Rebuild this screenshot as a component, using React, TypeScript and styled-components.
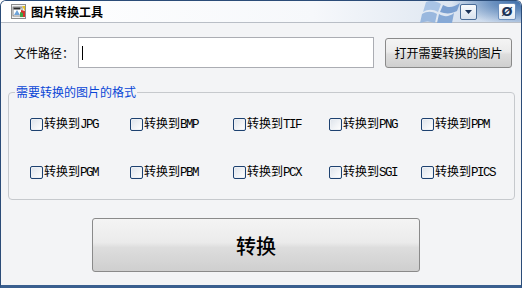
import * as React from 'react';
import styled, { createGlobalStyle } from 'styled-components';

const GlobalStyle = createGlobalStyle`
	html, body {
		margin: 0;
		padding: 0;
		background: #ffffff;
	}
	body {
		font-family: "Noto Sans CJK SC", "DejaVu Sans", sans-serif;
		font-size: 12px;
		color: #000;
	}
`;

const Window = styled.div`
	box-sizing: border-box;
	width: 522px;
	height: 288px;
	display: flex;
	flex-direction: column;
	border: 1px solid #2b4c78;
	border-bottom: 3px solid #3a5f8f;
	border-radius: 6px 6px 0 0;
	background: #f3f4f6;
	overflow: hidden;
`;

const TitleBar = styled.div`
	height: 21px;
	flex: none;
	display: flex;
	align-items: center;
	padding-left: 10px;
	border-bottom: 1px solid #b9bec6;
	background:
		radial-gradient(ellipse 70px 24px at 100% 0%, #3f6ea8 0%, rgba(80, 125, 180, 0.8) 40%, rgba(160, 190, 225, 0) 100%),
		linear-gradient(to right, #ffffff 0%, #f6f8fb 60%, #e3eaf3 82%, #c3d4ea 100%);
	position: relative;
`;

const AppIcon = styled.svg`
	width: 15px;
	height: 15px;
	flex: none;
`;

const Title = styled.span`
	margin-left: 5px;
	font-weight: bold;
	font-size: 12px;
	line-height: 14px;
`;

const Watermark = styled.svg`
	position: absolute;
	left: 415px;
	top: 0;
	width: 46px;
	height: 22px;
`;

const CaptionButtons = styled.div`
	margin-left: auto;
	display: flex;
	align-items: center;
	gap: 21px;
	padding-right: 5px;
	position: relative;
`;

const CaptionButton = styled.div`
	box-sizing: border-box;
	width: 17px;
	height: 16px;
	border: 1px solid #4a6c97;
	border-radius: 2px;
	background: linear-gradient(#fafbfd, #d9e2ee);
	display: flex;
	align-items: center;
	justify-content: center;
	color: #1c3358;
	font-family: "DejaVu Sans", sans-serif;
	font-weight: bold;
	font-size: 13px;
	line-height: 1;
`;

const CloseButton = styled(CaptionButton)`
	border-color: #6c8fbd;
	background: linear-gradient(#ffffff, #e4ebf4);
	width: 18px;
	height: 17px;
`;

const Body = styled.div`
	flex: 1;
	display: flex;
	flex-direction: column;
	padding: 14px 7px 0 7px;
`;

const PathRow = styled.div`
	display: flex;
	align-items: center;
	height: 31px;
`;

const Label = styled.span`
	width: 64px;
	padding-left: 6px;
	flex: none;
	white-space: nowrap;
	font-size: 12px;
`;

const PathInput = styled.div`
	box-sizing: border-box;
	width: 296px;
	height: 31px;
	border: 1px solid #abadb3;
	background: #ffffff;
	display: flex;
	align-items: center;
	padding-left: 3px;
`;

const Caret = styled.span`
	width: 1px;
	height: 14px;
	background: #000;
`;

const Button = styled.button<{ $big?: boolean }>`
	box-sizing: border-box;
	border: 1px solid #8a8a8a;
	border-radius: 3px;
	background: linear-gradient(#f4f4f4 0%, #ebebeb 45%, #dddddd 55%, #cfcfcf 100%);
	font-family: "Noto Sans CJK SC", sans-serif;
	color: #000;
	padding: 0;
	font-size: ${(p) => (p.$big ? '20px' : '12px')};
	font-weight: ${(p) => (p.$big ? 500 : 400)};
`;

const OpenButton = styled(Button)`
	margin-left: 11px;
	width: 127px;
	height: 30px;
`;

const Group = styled.fieldset`
	box-sizing: border-box;
	margin: 17px 0 0 0;
	width: 507px;
	height: 115px;
	border: 1px solid #c6c9cd;
	border-radius: 4px;
	padding: 18px 0 0 21px;
`;

const Legend = styled.legend`
	color: #0a46d6;
	font-size: 12px;
	padding: 0 1px;
	margin-left: -15px;
	line-height: 14px;
`;

const Grid = styled.div`
	display: grid;
	grid-template-columns: 100px 103px 96px 92px auto;
	row-gap: 34px;
`;

const Option = styled.label`
	display: flex;
	align-items: center;
	height: 14px;
	white-space: nowrap;
`;

const Box = styled.span`
	box-sizing: border-box;
	width: 13px;
	height: 13px;
	flex: none;
	border: 1px solid #1d4170;
	border-radius: 2px;
	background: linear-gradient(135deg, #dce2ea 0%, #f2f4f7 60%, #ffffff 100%);
	box-shadow: inset 0 0 0 1px #eef1f5;
	margin-right: 1px;
`;

const OptionText = styled.span`
	line-height: 14px;
`;

const Ext = styled.span`
	font-family: "Liberation Mono", monospace;
	font-size: 12.5px;
	letter-spacing: -1.5px;
`;

const ConvertRow = styled.div`
	padding: 18px 0 0 84px;
`;

const ConvertButton = styled(Button)`
	width: 328px;
	height: 54px;
`;

const formats = ['JPG', 'BMP', 'TIF', 'PNG', 'PPM', 'PGM', 'PBM', 'PCX', 'SGI', 'PICS'];

export default function App(): JSX.Element {
	return (
		<>
			<GlobalStyle />
			<Window>
				<TitleBar>
					<AppIcon viewBox="0 0 15 15">
						<rect x="0.5" y="0.5" width="14" height="14" fill="#f4f4f4" stroke="#8c8c8c" />
						<rect x="2" y="3" width="9" height="9" fill="#ffffff" stroke="#6b6b6b" strokeWidth="0.8" />
						<path d="M3 11 L6 6 L9 11 Z" fill="#6fa3d8" />
						<rect x="2.5" y="3.5" width="7" height="2" fill="#2c2c2c" />
						<path d="M11 2 L14 2 L14 7 Z" fill="#e8c21f" />
						<path d="M10 6 L14 7 L14 13 L10 13 Z" fill="#d6322c" />
						<path d="M9 8 L12 9 L12 13 L9 13 Z" fill="#3fa447" />
					</AppIcon>
					<Title>图片转换工具</Title>
					<Watermark viewBox="0 0 46 22">
						<path d="M6 13 C11 10 16 10 21 13 L19 22 C14 20 9 20 4 22 Z" fill="#9ab8de" />
						<path d="M23 13 C28 16 33 16 38 12 L36 22 C31 24 26 24 21 22 Z" fill="#86a9d6" />
						<path d="M10 1 C15 -1 20 0 25 3 L22 11 C17 8 12 8 7 11 Z" fill="#a9c4e6" />
						<path d="M27 4 C32 7 37 7 44 2 L41 10 C35 13 30 13 24 11 Z" fill="#7a9fd0" />
					</Watermark>
					<CaptionButtons>
						<CaptionButton>
							<svg width="7" height="4" viewBox="0 0 7 4">
								<path d="M0 0 H7 L3.5 4 Z" fill="#1c3358" />
							</svg>
						</CaptionButton>
						<CloseButton>Ø</CloseButton>
					</CaptionButtons>
				</TitleBar>
				<Body>
					<PathRow>
						<Label>文件路径：</Label>
						<PathInput>
							<Caret />
						</PathInput>
						<OpenButton>打开需要转换的图片</OpenButton>
					</PathRow>
					<Group>
						<Legend>需要转换的图片的格式</Legend>
						<Grid>
							{formats.map((f) => (
								<Option key={f}>
									<Box />
									<OptionText>
										转换到<Ext>{f}</Ext>
									</OptionText>
								</Option>
							))}
						</Grid>
					</Group>
					<ConvertRow>
						<ConvertButton $big>转换</ConvertButton>
					</ConvertRow>
				</Body>
			</Window>
		</>
	);
}
